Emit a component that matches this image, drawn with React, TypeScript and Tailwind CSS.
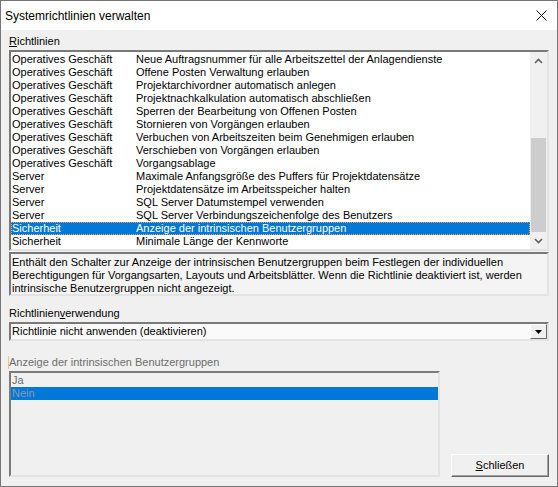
import { ReactNode } from "react";

const rows: [string, string][] = [
  ["Operatives Geschäft", "Neue Auftragsnummer für alle Arbeitszettel der Anlagendienste"],
  ["Operatives Geschäft", "Offene Posten Verwaltung erlauben"],
  ["Operatives Geschäft", "Projektarchivordner automatisch anlegen"],
  ["Operatives Geschäft", "Projektnachkalkulation automatisch abschließen"],
  ["Operatives Geschäft", "Sperren der Bearbeitung von Offenen Posten"],
  ["Operatives Geschäft", "Stornieren von Vorgängen erlauben"],
  ["Operatives Geschäft", "Verbuchen von Arbeitszeiten beim Genehmigen erlauben"],
  ["Operatives Geschäft", "Verschieben von Vorgängen erlauben"],
  ["Operatives Geschäft", "Vorgangsablage"],
  ["Server", "Maximale Anfangsgröße des Puffers für Projektdatensätze"],
  ["Server", "Projektdatensätze im Arbeitsspeicher halten"],
  ["Server", "SQL Server Datumstempel verwenden"],
  ["Server", "SQL Server Verbindungszeichenfolge des Benutzers"],
  ["Sicherheit", "Anzeige der intrinsischen Benutzergruppen"],
  ["Sicherheit", "Minimale Länge der Kennworte"],
];

function Sunken({ className, children }: { className: string; children?: ReactNode }) {
  return (
    <div
      className={
        "border-2 border-t-[#7a7a7a] border-l-[#7a7a7a] border-r-[#e3e3e3] border-b-[#e3e3e3] " +
        className
      }
    >
      {children}
    </div>
  );
}

function Chevron({ up }: { up?: boolean }) {
  return (
    <svg width="9" height="6" viewBox="0 0 9 6" className={up ? "" : "rotate-180"}>
      <path d="M1 5 L4.5 1.5 L8 5" fill="none" stroke="#606060" strokeWidth="1.6" />
    </svg>
  );
}

export default function App() {
  return (
    <div
      className="w-[558px] h-[487px] border border-[#767676] bg-[#f0f0f0] flex flex-col text-[11px] leading-[13px] text-black"
      style={{ fontFamily: '"Liberation Sans", Arial, sans-serif' }}
    >
      <div className="h-[29px] bg-white flex items-center justify-between pl-[4px] pr-[10px] text-[12px]">
        <span className="mt-[1px]">Systemrichtlinien verwalten</span>
        <svg width="11" height="11" viewBox="0 0 11 11">
          <path d="M0.5 0.5 L10.5 10.5 M10.5 0.5 L0.5 10.5" stroke="#111" strokeWidth="1" />
        </svg>
      </div>

      <div className="flex-1 flex flex-col px-[8px]">
        <div className="mt-[5px] h-[13px]">
          <span className="underline">R</span>ichtlinien
        </div>

        <Sunken className="mt-[2px] h-[201px] bg-white flex">
          <div className="flex-1 pt-[1px] pl-0">
            {rows.map(([a, b], i) => {
              const sel = i === 13;
              return (
                <div
                  key={i}
                  className={
                    "h-[13px] flex whitespace-nowrap " +
                    (sel ? "bg-[#0078d7] text-white outline outline-1 outline-dotted outline-[#f0a050] -outline-offset-1" : "")
                  }
                >
                  <span className="w-[125px] pl-[1px]">{a}</span>
                  <span>{b}</span>
                </div>
              );
            })}
          </div>
          <div className="w-[17px] bg-[#f0f0f0] flex flex-col">
            <div className="h-[17px] flex items-center justify-center">
              <Chevron up />
            </div>
            <div className="flex-1 flex flex-col justify-end">
              <div className="h-[94px] mx-[1px] bg-[#cdcdcd]" />
            </div>
            <div className="h-[17px] flex items-center justify-center">
              <Chevron />
            </div>
          </div>
        </Sunken>

        <Sunken className="mt-[1px] h-[44px] bg-[#f4f4f4] pl-[1px] pt-[2px]">
          <p>
            Enthält den Schalter zur Anzeige der intrinsischen Benutzergruppen beim Festlegen der individuellen
            <br />
            Berechtigungen für Vorgangsarten, Layouts und Arbeitsblätter. Wenn die Richtlinie deaktiviert ist, werden
            <br />
            intrinsische Benutzergruppen nicht angezeigt.
          </p>
        </Sunken>

        <div className="mt-[11px] h-[13px]">
          Richtlinien<span className="underline">v</span>erwendung
        </div>

        <Sunken className="mt-[2px] h-[19px] bg-[#fafafa] flex items-center">
          <span className="flex-1 pl-[1px]">Richtlinie nicht anwenden (deaktivieren)</span>
          <div className="w-[17px] h-[15px] border border-t-white border-l-white border-r-[#696969] border-b-[#696969] bg-[#f0f0f0] flex items-center justify-center">
            <svg width="7" height="4" viewBox="0 0 7 4">
              <path d="M0 0 H7 L3.5 4 Z" fill="#000" />
            </svg>
          </div>
        </Sunken>

        <div className="mt-[15px] h-[13px] -ml-[1px] pl-0 border-l border-[#f5c27a] text-[#6d6d6d]">
          Anzeige der intrinsischen Benutzergruppen
        </div>

        <div className="mt-[2px] flex items-end justify-between">
          <Sunken className="w-[431px] h-[106px] bg-[#f0f0f0] pt-[1px] text-[#6d6d6d]">
            <div className="h-[13px] pl-[1px]">Ja</div>
            <div className="h-[13px] pl-[1px] bg-[#0078d7] text-[#8a9ab0]">Nein</div>
          </Sunken>
          <button className="w-[98px] h-[23px] border border-t-white border-l-white border-r-[#696969] border-b-[#696969] bg-[#f0f0f0] shadow-[inset_-1px_-1px_0_#a0a0a0] text-[11px] flex items-center justify-center">
            <span>
              <span className="underline">S</span>chließen
            </span>
          </button>
        </div>
      </div>
    </div>
  );
}
